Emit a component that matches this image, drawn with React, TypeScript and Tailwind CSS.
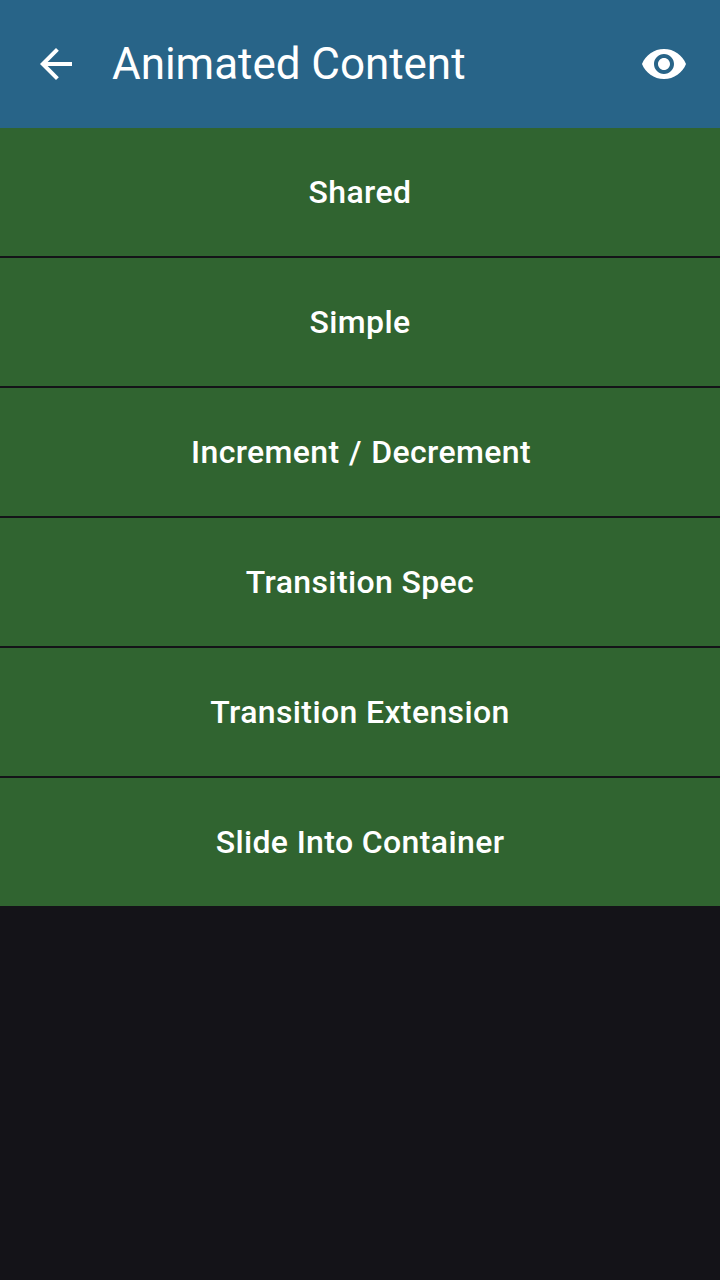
const items = [
  { label: "Shared", spacing: "" },
  { label: "Simple", spacing: "" },
  { label: "Increment / Decrement", spacing: "pl-0.5 [word-spacing:1.1px]" },
  { label: "Transition Spec", spacing: "" },
  { label: "Transition Extension", spacing: "" },
  { label: "Slide Into Container", spacing: "" },
];

function BackIcon() {
  return (
    <svg viewBox="0 0 24 24" className="size-12 fill-white" aria-hidden="true">
      <path d="M20 11H7.83l5.59-5.59L12 4l-8 8 8 8 1.41-1.41L7.83 13H20v-2z" />
    </svg>
  );
}

function EyeIcon() {
  return (
    <svg viewBox="0 0 24 24" className="size-12 fill-white" aria-hidden="true">
      <path d="M12 4.5C7 4.5 2.73 7.61 1 12c1.73 4.39 6 7.5 11 7.5s9.27-3.11 11-7.5c-1.73-4.39-6-7.5-11-7.5zM12 17c-2.76 0-5-2.24-5-5s2.24-5 5-5 5 2.24 5 5-2.24 5-5 5zm0-8c-1.66 0-3 1.34-3 3s1.34 3 3 3 3-1.34 3-3-1.34-3-3-3z" />
    </svg>
  );
}

export default function App() {
  return (
    <div className="flex h-screen flex-col bg-[#141318] font-['Roboto',sans-serif] text-white">
      <header className="flex h-32 shrink-0 items-center bg-[#286488] px-8">
        <button aria-label="Back">
          <BackIcon />
        </button>
        <h1 className="ml-8 flex-1 text-[44px] leading-[56px] tracking-[-0.04px] whitespace-nowrap">
          Animated Content
        </h1>
        <button aria-label="Show">
          <EyeIcon />
        </button>
      </header>
      <main className="flex flex-col gap-0.5">
        {items.map((item) => (
          <button
            key={item.label}
            className={`flex h-32 items-center justify-center bg-[#306430] text-[32px] leading-[48px] font-medium tracking-[0.37px] ${item.spacing}`}
          >
            {item.label}
          </button>
        ))}
      </main>
    </div>
  );
}
